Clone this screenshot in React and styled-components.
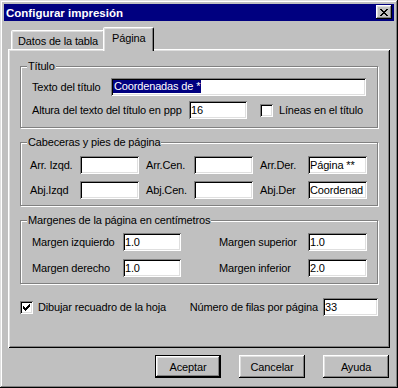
import React from 'react';
import styled, { createGlobalStyle } from 'styled-components';

const GlobalStyle = createGlobalStyle`
  html, body {
    margin: 0;
    padding: 0;
    background: #c0c0c0;
  }
  body {
    font-family: "Liberation Sans", Arial, sans-serif;
    font-size: 11px;
    letter-spacing: -0.15px;
    color: #000;
  }
  * {
    box-sizing: border-box;
  }
`;

const Window = styled.div`
  width: 398px;
  height: 388px;
  padding: 4px;
  background: #c0c0c0;
  display: flex;
  flex-direction: column;
  box-shadow: inset -1px -1px #000, inset 1px 1px #dfdfdf,
    inset -2px -2px #808080, inset 2px 2px #fff;
`;

const TitleBar = styled.div`
  height: 17px;
  flex: none;
  background: #000080;
  color: #fff;
  display: flex;
  align-items: center;
  justify-content: space-between;
  padding: 0 2px;
  font-weight: bold;
  font-size: 11.5px;
  letter-spacing: 0;
`;

const CloseBtn = styled.button`
  width: 16px;
  height: 14px;
  padding: 0;
  border: none;
  background: #c0c0c0;
  display: flex;
  align-items: center;
  justify-content: center;
  margin-bottom: 1px;
  box-shadow: inset -1px -1px #000, inset 1px 1px #fff,
    inset -2px -2px #808080, inset 2px 2px #dfdfdf;
`;

const Body = styled.div`
  flex: 1;
  display: flex;
  flex-direction: column;
  padding: 6px 4px 0;
`;

const TabStrip = styled.div`
  height: 22px;
  flex: none;
  display: flex;
  align-items: flex-end;
  padding-left: 3px;
`;

const Tab = styled.div`
  height: ${(p) => (p.$active ? 24 : 19)}px;
  margin: 0 ${(p) => (p.$active ? -2 : 0)}px ${(p) => (p.$active ? -2 : 0)}px;
  padding: 4px ${(p) => (p.$active ? 8 : 6)}px 0;
  border: 1px solid;
  border-bottom: none;
  border-color: #fff #000 transparent #fff;
  border-radius: 2px 2px 0 0;
  box-shadow: inset -1px 0 #808080, inset 1px 1px #dfdfdf;
  background: #c0c0c0;
  line-height: 13px;
  white-space: nowrap;
  position: relative;
  z-index: ${(p) => (p.$active ? 2 : 0)};
`;

const Panel = styled.div`
  flex: 1;
  display: flex;
  flex-direction: column;
  padding: 11px 12px 0;
  box-shadow: inset 1px 1px #fff, inset -1px -1px #000,
    inset 2px 2px #dfdfdf, inset -2px -2px #808080;
`;

const Group = styled.fieldset`
  margin: ${(p) => p.$top || 0}px 0 0;
  padding: 0;
  min-width: 0;
  border: 1px solid #808080;
  box-shadow: inset 1px 1px #fff, 1px 1px #fff;
`;

const Legend = styled.legend`
  margin-left: 6px;
  padding: 0 1px;
  line-height: 13px;
  background: #c0c0c0;
`;

const Rows = styled.div`
  display: flex;
  flex-direction: column;
  gap: 5px;
  padding: 5px 11px 8px;
`;

const Row = styled.div`
  display: flex;
  align-items: center;
`;

const Label = styled.span`
  flex: none;
  white-space: nowrap;
  width: ${(p) => (p.$w ? `${p.$w}px` : 'auto')};
  padding-left: ${(p) => p.$indent || 0}px;
  margin-left: ${(p) => p.$gap || 0}px;
`;

const Field = styled.div`
  height: 18px;
  width: ${(p) => (p.$w ? `${p.$w}px` : 'auto')};
  flex: ${(p) => (p.$w ? 'none' : 1)};
  margin-left: ${(p) => p.$gap || 0}px;
  background: #fff;
  padding: 0 2px;
  line-height: 18px;
  white-space: nowrap;
  overflow: hidden;
  box-shadow: inset 1px 1px #808080, inset -1px -1px #fff,
    inset 2px 2px #000, inset -2px -2px #dfdfdf;
`;

const Selected = styled.span`
  display: inline-block;
  vertical-align: top;
  margin-top: 2px;
  height: 13px;
  line-height: 13px;
  padding: 0 1px;
  background: #000080;
  color: #fff;
`;

const CheckBox = styled.span`
  width: 13px;
  height: 13px;
  flex: none;
  display: inline-flex;
  align-items: center;
  justify-content: center;
  margin-left: ${(p) => p.$gap || 0}px;
  background: #fff;
  box-shadow: inset 1px 1px #808080, inset -1px -1px #fff,
    inset 2px 2px #000, inset -2px -2px #dfdfdf;
`;

const HeaderGrid = styled.div`
  display: grid;
  grid-template-columns: 50px 59px 55px 59px 55px 59px;
  row-gap: 7px;
  align-items: center;
  padding: 7px 12px 6px 9px;
`;

const MarginGrid = styled.div`
  display: grid;
  grid-template-columns: 91px 58px 127px 59px;
  row-gap: 8px;
  align-items: center;
  padding: 6px 11px 6px;
`;

const BottomRow = styled.div`
  margin-top: 14px;
  display: flex;
  align-items: center;
  justify-content: space-between;
`;

const Side = styled.div`
  display: flex;
  align-items: center;
`;

const ButtonRow = styled.div`
  flex: none;
  display: flex;
  justify-content: flex-end;
  gap: 18px;
  margin: 7px 1px 6px 0;
`;

const Button = styled.button`
  width: 66px;
  height: 23px;
  padding: 0;
  font-family: inherit;
  font-size: 11px;
  letter-spacing: inherit;
  color: #000;
  background: #c0c0c0;
  border: ${(p) => (p.$default ? '1px solid #000' : 'none')};
  box-shadow: inset -1px -1px #000, inset 1px 1px #fff,
    inset -2px -2px #808080, inset 2px 2px #dfdfdf;
`;

const CloseGlyph = () => (
  <svg width="8" height="7" viewBox="0 0 8 7" shapeRendering="crispEdges">
    <path
      fill="#000"
      d="M0 0h2v1h-2z M6 0h2v1h-2z M1 1h2v1h-2z M5 1h2v1h-2z M2 2h4v1h-4z M3 3h2v1h-2z M2 4h4v1h-4z M1 5h2v1h-2z M5 5h2v1h-2z M0 6h2v1h-2z M6 6h2v1h-2z"
    />
  </svg>
);

const CheckMark = () => (
  <svg width="7" height="7" viewBox="0 0 7 7" shapeRendering="crispEdges">
    <path
      fill="#000"
      d="M6 0h1v1h-1z M5 1h2v1h-2z M0 2h1v1h-1z M4 2h3v1h-3z M0 3h2v1h-2z M3 3h3v1h-3z M0 4h5v1h-5z M1 5h3v1h-3z M2 6h1v1h-1z"
    />
  </svg>
);

const headers = [
  ['Arr. Izqd.', '', 'Arr.Cen.', '', 'Arr.Der.', 'Página **'],
  ['Abj.Izqd', '', 'Abj.Cen.', '', 'Abj.Der', 'Coordenad'],
];

const margins = [
  ['Margen izquierdo', '1.0', 'Margen superior', '1.0'],
  ['Margen derecho', '1.0', 'Margen inferior', '2.0'],
];

export default function App() {
  return (
    <>
      <GlobalStyle />
      <Window>
        <TitleBar>
          <span>Configurar impresión</span>
          <CloseBtn type="button">
            <CloseGlyph />
          </CloseBtn>
        </TitleBar>
        <Body>
          <TabStrip>
            <Tab>Datos de la tabla</Tab>
            <Tab $active>Página</Tab>
          </TabStrip>
          <Panel>
            <Group>
              <Legend>Título</Legend>
              <Rows>
                <Row>
                  <Label $w={79}>Texto del título</Label>
                  <Field>
                    <Selected>Coordenadas de *</Selected>
                  </Field>
                </Row>
                <Row>
                  <Label $w={157}>Altura del texto del título en ppp</Label>
                  <Field $w={58}>16</Field>
                  <CheckBox $gap={13} />
                  <Label $gap={6}>Líneas en el título</Label>
                </Row>
              </Rows>
            </Group>

            <Group $top={8}>
              <Legend>Cabeceras y pies de página</Legend>
              <HeaderGrid>
                {headers.map((row) =>
                  [0, 2, 4].map((i) => (
                    <React.Fragment key={row[i]}>
                      <Label $indent={i === 0 ? 0 : 7}>{row[i]}</Label>
                      <Field>{row[i + 1]}</Field>
                    </React.Fragment>
                  ))
                )}
              </HeaderGrid>
            </Group>

            <Group $top={8}>
              <Legend>Margenes de la página en centímetros</Legend>
              <MarginGrid>
                {margins.map((row) => (
                  <React.Fragment key={row[0]}>
                    <Label>{row[0]}</Label>
                    <Field>{row[1]}</Field>
                    <Label $indent={38}>{row[2]}</Label>
                    <Field>{row[3]}</Field>
                  </React.Fragment>
                ))}
              </MarginGrid>
            </Group>

            <BottomRow>
              <Side>
                <CheckBox>
                  <CheckMark />
                </CheckBox>
                <Label $gap={5}>Dibujar recuadro de la hoja</Label>
              </Side>
              <Side>
                <Label>Número de filas por página</Label>
                <Field $w={55} $gap={5}>
                  33
                </Field>
              </Side>
            </BottomRow>
          </Panel>
          <ButtonRow>
            <Button type="button" $default>
              Aceptar
            </Button>
            <Button type="button">Cancelar</Button>
            <Button type="button">Ayuda</Button>
          </ButtonRow>
        </Body>
      </Window>
    </>
  );
}
